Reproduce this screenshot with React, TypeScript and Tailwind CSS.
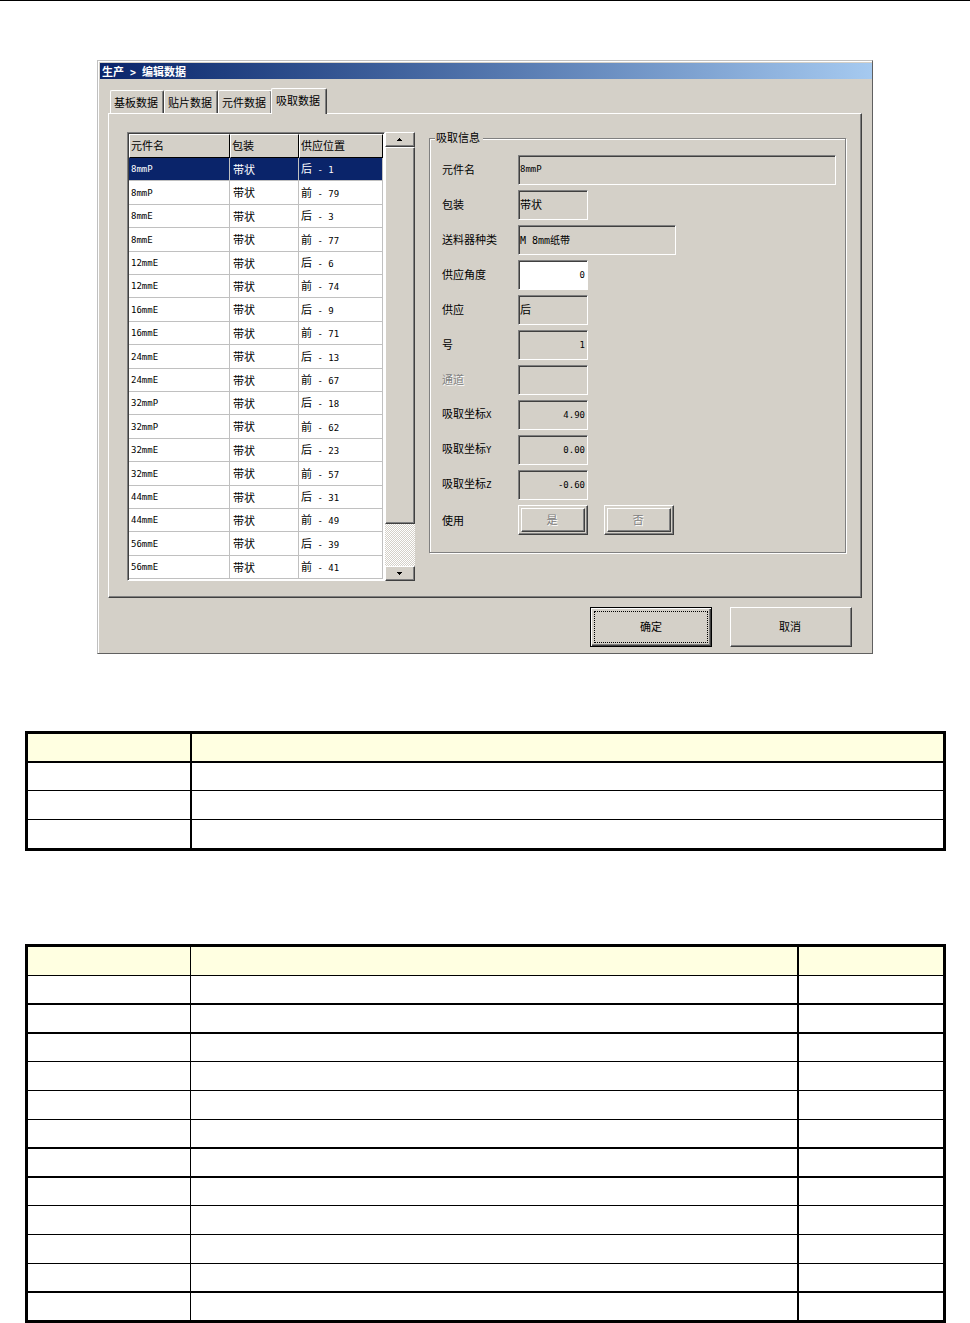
import { useState } from 'react';
import clsx from 'clsx';

type Pickup = {
  name: string;
  side: string;
  slot: number;
};

const TABS = ['基板数据', '贴片数据', '元件数据', '吸取数据'];

const PICKUPS: Pickup[] = [
  { name: '8mmP', side: '后', slot: 1 },
  { name: '8mmP', side: '前', slot: 79 },
  { name: '8mmE', side: '后', slot: 3 },
  { name: '8mmE', side: '前', slot: 77 },
  { name: '12mmE', side: '后', slot: 6 },
  { name: '12mmE', side: '前', slot: 74 },
  { name: '16mmE', side: '后', slot: 9 },
  { name: '16mmE', side: '前', slot: 71 },
  { name: '24mmE', side: '后', slot: 13 },
  { name: '24mmE', side: '前', slot: 67 },
  { name: '32mmP', side: '后', slot: 18 },
  { name: '32mmP', side: '前', slot: 62 },
  { name: '32mmE', side: '后', slot: 23 },
  { name: '32mmE', side: '前', slot: 57 },
  { name: '44mmE', side: '后', slot: 31 },
  { name: '44mmE', side: '前', slot: 49 },
  { name: '56mmE', side: '后', slot: 39 },
  { name: '56mmE', side: '前', slot: 41 },
];

const FIELDS = [
  { id: 'name', label: '元件名', value: '8mmP', style: 'w-full text-[9px]' },
  { id: 'pack', label: '包装', value: '带状', style: 'w-[70px] text-[11px]' },
  { id: 'feeder', label: '送料器种类', value: 'M 8mm纸带', style: 'w-[158px] text-[10px]' },
  { id: 'angle', label: '供应角度', value: '0', style: 'w-[70px] text-[9px] text-right', editable: true },
  { id: 'side', label: '供应', value: '后', style: 'w-[70px] text-[11px]' },
  { id: 'slot', label: '号', value: '1', style: 'w-[70px] text-[9px] text-right' },
  { id: 'channel', label: '通道', value: '', style: 'w-[70px] text-[9px]', disabled: true },
  { id: 'x', label: '吸取坐标', axis: 'X', value: '4.90', style: 'w-[70px] text-[9px] text-right' },
  { id: 'y', label: '吸取坐标', axis: 'Y', value: '0.00', style: 'w-[70px] text-[9px] text-right' },
  { id: 'z', label: '吸取坐标', axis: 'Z', value: '-0.60', style: 'w-[70px] text-[9px] text-right' },
];

const CJK = "font-['Noto_Sans_CJK_SC',sans-serif]";
const MONO = "font-['DejaVu_Sans_Mono','Noto_Sans_CJK_SC',monospace]";

const RAISED =
  'border border-t-white border-l-white border-r-[#404040] border-b-[#404040] shadow-[inset_-1px_-1px_0_#808080]';
const SUNKEN =
  'border border-t-[#808080] border-l-[#808080] border-r-white border-b-white shadow-[inset_1px_1px_0_#404040]';
const ETCHED_TEXT = 'text-[#808080] [text-shadow:1px_1px_0_#fff]';

const Tabs = () => {
  const [active, setActive] = useState(3);

  return (
    <div role="tablist" className="flex h-[25px] items-end pl-[2px]">
      {TABS.map((tab, i) => (
        <button
          key={tab}
          type="button"
          role="tab"
          aria-selected={i === active}
          onClick={() => setActive(i)}
          className={clsx(
            'rounded-t-[2px] border border-b-0 border-t-white border-l-white border-r-[#404040] bg-[#d4d0c8] text-center shadow-[inset_-1px_0_0_#808080]',
            i === active ? 'relative z-10 -ml-px -mb-px h-[26px] w-14 pr-[2px] pb-1' : 'h-[23px] w-[54px] pr-[2px] pb-px',
          )}
        >
          {tab}
        </button>
      ))}
    </div>
  );
};

const PickupTable = () => {
  const [selected, setSelected] = useState(0);

  return (
    <div className={`h-[449px] w-[258px] overflow-hidden bg-white p-px ${SUNKEN}`}>
      <table className="w-full table-fixed border-separate border-spacing-0 text-left">
        <thead>
          <tr className="h-6 bg-[#d4d0c8]">
            {['元件名', '包装', '供应位置'].map((title, i) => (
              <th
                key={title}
                className={clsx(
                  'border border-t-white border-l-white border-r-black border-b-black pt-0 pb-[2px] pl-px font-normal',
                  i === 0 && 'w-[101px]',
                  i === 1 && 'w-[69px]',
                )}
              >
                {title}
              </th>
            ))}
          </tr>
        </thead>
        <tbody>
          {PICKUPS.map((row, i) => (
            <tr
              key={i}
              onClick={() => setSelected(i)}
              className={clsx(
                i % 5 === 1 || i % 5 === 3 ? 'h-6' : 'h-[23px]',
                i === selected ? 'bg-[#0a246a] text-white' : 'bg-white',
              )}
            >
              <td className={`border-r border-b border-[#c0c0c0] py-0 pl-[2px] text-[9px] ${MONO}`}>{row.name}</td>
              <td className="border-r border-b border-[#c0c0c0] pt-0 pb-px pl-[3px]">带状</td>
              <td className="border-r border-b border-[#c0c0c0] py-0 pl-[2px]">
                {row.side}
                <span className={`whitespace-pre text-[9px] ${MONO}`}>{` - ${row.slot}`}</span>
              </td>
            </tr>
          ))}
        </tbody>
      </table>
    </div>
  );
};

const ScrollBar = () => (
  <div className="flex h-[449px] w-[30px] flex-col bg-[repeating-conic-gradient(#fff_0_25%,#d4d0c8_0_50%)] bg-[length:2px_2px]">
    <button type="button" aria-label="向上滚动" className={`flex h-[15px] items-center justify-center bg-[#d4d0c8] pr-[2px] ${RAISED}`}>
      <svg width="7" height="4" viewBox="0 0 7 4" shapeRendering="crispEdges">
        <path d="M3 0h1v1h1v1h1v1H1V2h1V1h1z" />
      </svg>
    </button>
    <div className={`h-[377px] bg-[#d4d0c8] ${RAISED}`} />
    <button type="button" aria-label="向下滚动" className={`mt-auto flex h-[15px] items-center justify-center bg-[#d4d0c8] pr-[2px] ${RAISED}`}>
      <svg width="7" height="4" viewBox="0 0 7 4" shapeRendering="crispEdges">
        <path d="M1 0h5v1H5v1H4v1H3V2H2V1H1z" />
      </svg>
    </button>
  </div>
);

const ChoiceButton = ({ label }: { label: string }) => (
  <button type="button" disabled className={`h-[30px] w-[70px] bg-[#d4d0c8] p-[2px] ${RAISED}`}>
    <span className={`flex h-full items-center justify-center pr-[2px] pb-[2px] ${RAISED} ${ETCHED_TEXT}`}>{label}</span>
  </button>
);

const PickupInfo = () => (
  <fieldset className="min-w-0 flex-1 self-start border border-[#808080] pt-[9px] pr-[9px] pb-[17px] pl-3 shadow-[1px_1px_0_#fff,inset_1px_1px_0_#fff]">
    <legend className="-ml-[7px] bg-[#d4d0c8] pr-[3px] pb-[2px] pl-px leading-[14px]">吸取信息</legend>
    <div className="flex flex-col gap-[5px]">
      {FIELDS.map(field => (
        <div key={field.id} className="flex items-center">
          <label htmlFor={field.id} className={clsx('w-[76px] shrink-0 pb-[2px]', field.disabled && ETCHED_TEXT)}>
            {field.label}
            {field.axis && <span className={`text-[9px] ${MONO}`}>{field.axis}</span>}
          </label>
          <input
            id={field.id}
            type="text"
            defaultValue={field.value}
            readOnly={!field.editable}
            disabled={field.disabled}
            className={clsx(
              'h-[30px] rounded-none',
              MONO,
              SUNKEN,
              field.style,
              field.style.includes('text-right') ? 'pr-[2px]' : 'pb-[2px] pl-px',
              field.editable ? 'bg-white' : 'bg-[#d4d0c8]',
            )}
          />
        </div>
      ))}
      <div role="group" aria-labelledby="use" className="flex items-center">
        <span id="use" className="w-[76px] shrink-0 pb-px">使用</span>
        <div className="flex gap-4">
          <ChoiceButton label="是" />
          <ChoiceButton label="否" />
        </div>
      </div>
    </div>
  </fieldset>
);

const EditDialog = () => (
  <section
    className={`mx-[10%] mt-[59px] border border-t-[#c0c0c0] border-l-[#c0c0c0] border-r-[#606060] border-b-[#606060] bg-[#d4d0c8] pt-[2px] pl-[2px] text-[11px] leading-4 text-black shadow-[inset_1px_1px_0_#fff] ${CJK}`}
  >
    <h1 className="h-4 bg-linear-to-r from-[#0a246a] to-[#a6caf0] pl-[2px] font-bold text-white">
      生产<span className={`whitespace-pre text-[10px] ${MONO}`}>{' > '}</span>编辑数据
    </h1>
    <div className="mt-[9px] mr-[10px] ml-2">
      <Tabs />
      <div className="flex border border-t-white border-l-white border-r-[#404040] border-b-[#404040] pt-4 pr-[15px] pb-4 pl-[18px] shadow-[inset_-1px_-1px_0_#808080]">
        <div className="mt-[2px] mr-[14px] flex shrink-0">
          <PickupTable />
          <ScrollBar />
        </div>
        <PickupInfo />
      </div>
    </div>
    <div className="flex justify-end gap-[18px] pt-[9px] pr-5 pb-[6px]">
      <button type="button" className="h-10 w-[122px] border border-black p-[3px] shadow-[inset_1px_1px_0_#fff,inset_-1px_-1px_0_#404040,inset_-2px_-2px_0_#808080]">
        <span className="flex h-full items-center justify-center border border-dotted border-black pb-[2px]">确定</span>
      </button>
      <button type="button" className={`h-10 w-[122px] pr-[2px] pb-[2px] ${RAISED}`}>取消</button>
    </div>
  </section>
);

const SheetHead = ({ className }: { className: string }) => (
  <th className={`border-black bg-[#ffffe1] p-0 ${className}`} />
);

const ITEM_ROWS = ['h-7 border-b', 'h-[29px] border-b', 'h-7'];

const SPEC_ROWS = [
  'h-[29px] border-b-2',
  'h-[29px] border-b-2',
  'h-7 border-b',
  'h-[29px] border-b',
  'h-[29px] border-b',
  'h-[29px] border-b-2',
  'h-[29px] border-b-2',
  'h-7 border-b',
  'h-[29px] border-b',
  'h-[29px] border-b',
  'h-[29px] border-b-2',
  'h-[27px]',
];

export default function App() {
  return (
    <main className="border-t border-black bg-white">
      <EditDialog />

      <div className="mt-[77px] mr-6 ml-[25px]">
        <table className="w-full table-fixed border-separate border-spacing-0 border-[3px] border-black">
          <thead>
            <tr>
              <SheetHead className="h-[29px] w-[164px] border-r-2 border-b-2" />
              <SheetHead className="h-[29px] border-b-2" />
            </tr>
          </thead>
          <tbody>
            {ITEM_ROWS.map((row, i) => (
              <tr key={i}>
                <td className={`border-r-2 border-black p-0 ${row}`} />
                <td className={`border-black p-0 ${row}`} />
              </tr>
            ))}
          </tbody>
        </table>

        <table className="mt-[93px] w-full table-fixed border-separate border-spacing-0 border-[3px] border-black">
          <thead>
            <tr>
              <SheetHead className="h-[29px] w-[163px] border-r border-b" />
              <SheetHead className="h-[29px] border-r-2 border-b" />
              <SheetHead className="h-[29px] w-36 border-b" />
            </tr>
          </thead>
          <tbody>
            {SPEC_ROWS.map((row, i) => (
              <tr key={i}>
                <td className={`border-r border-black p-0 ${row}`} />
                <td className={`border-r-2 border-black p-0 ${row}`} />
                <td className={`border-black p-0 ${row}`} />
              </tr>
            ))}
          </tbody>
        </table>
      </div>
    </main>
  );
}
